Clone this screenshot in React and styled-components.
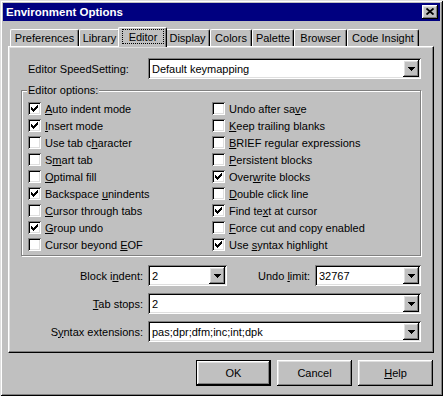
import React from 'react';
import styled, { createGlobalStyle, css } from 'styled-components';

const GlobalStyle = createGlobalStyle`
  html, body {
    margin: 0;
    padding: 0;
    background: #c0c0c0;
  }
  body {
    font-family: "Liberation Sans", Arial, sans-serif;
    font-size: 11px;
    color: #000;
  }
`;

const raised = css`
  box-shadow: inset -1px -1px #000, inset 1px 1px #fff, inset -2px -2px #808080, inset 2px 2px #dfdfdf;
`;

const sunken = css`
  box-shadow: inset 1px 1px #808080, inset -1px -1px #fff, inset 2px 2px #000, inset -2px -2px #dfdfdf;
`;

const tabs = [
    {name: 'Preferences', width: 69},
    {name: 'Library', width: 41},
    {name: 'Editor', width: 45, active: true},
    {name: 'Display', width: 45},
    {name: 'Colors', width: 42},
    {name: 'Palette', width: 42},
    {name: 'Browser', width: 53},
    {name: 'Code Insight', width: 72},
];

const options = [
    {label: 'Auto indent mode', key: 0, checked: true},
    {label: 'Insert mode', key: 0, checked: true},
    {label: 'Use tab character', key: 9},
    {label: 'Smart tab', key: 1},
    {label: 'Optimal fill', key: 0},
    {label: 'Backspace unindents', key: 10, checked: true},
    {label: 'Cursor through tabs', key: 0},
    {label: 'Group undo', key: 0, checked: true},
    {label: 'Cursor beyond EOF', key: 14},
    {label: 'Undo after save', key: 13},
    {label: 'Keep trailing blanks', key: 0},
    {label: 'BRIEF regular expressions', key: 0},
    {label: 'Persistent blocks', key: 0},
    {label: 'Overwrite blocks', key: 4, checked: true},
    {label: 'Double click line', key: 0},
    {label: 'Find text at cursor', key: 7, checked: true},
    {label: 'Force cut and copy enabled', key: 0},
    {label: 'Use syntax highlight', key: 4, checked: true},
];

// underline the access key letter
const Accel = ({text, at}) => {
    if (at === undefined || at < 0) return text;
    return (
        <>
            {text.slice(0, at)}
            <Key>{text[at]}</Key>
            {text.slice(at + 1)}
        </>
    );
};

const CheckMark = () => (
    <svg width="7" height="7" viewBox="0 0 7 7" shapeRendering="crispEdges">
        <path d="M0 2 L2 4 L7 -1 L7 2 L2 7 L0 5 Z" fill="#000" />
    </svg>
);

const DownArrow = () => (
    <svg width="7" height="4" viewBox="0 0 7 4" shapeRendering="crispEdges">
        <path d="M0 0 H7 L3.5 4 Z" fill="#000" />
    </svg>
);

const CloseGlyph = () => (
    <svg width="8" height="7" viewBox="0 0 8 7">
        <path d="M0.5 0.5 L7.5 6.5 M7.5 0.5 L0.5 6.5" stroke="#000" strokeWidth="1.8" fill="none" />
    </svg>
);

const Combo = ({value, width}) => (
    <ComboBox $width={width}>
        <ComboText>{value}</ComboText>
        <DropButton><DownArrow /></DropButton>
    </ComboBox>
);

const Option = ({label, at, checked}) => (
    <OptionRow>
        <CheckBox>{checked && <CheckMark />}</CheckBox>
        <span><Accel text={label} at={at} /></span>
    </OptionRow>
);

export default function App() {
    return (
        <>
            <GlobalStyle />
            <Window>
                <TitleBar>
                    <span>Environment Options</span>
                    <CloseButton><CloseGlyph /></CloseButton>
                </TitleBar>
                <Body>
                    <TabStrip>
                        {tabs.map(tab => (
                            <Tab key={tab.name} $width={tab.width} $active={tab.active}>
                                {tab.active ? <FocusRing>{tab.name}</FocusRing> : tab.name}
                            </Tab>
                        ))}
                    </TabStrip>
                    <Panel>
                        <FieldRow>
                            <FieldLabel>Editor SpeedSetting:</FieldLabel>
                            <Combo value="Default keymapping" />
                        </FieldRow>

                        <GroupBox>
                            <Legend>Editor options:</Legend>
                            {options.map(o => (
                                <Option key={o.label} label={o.label} at={o.key} checked={o.checked} />
                            ))}
                        </GroupBox>

                        <BottomFields>
                            <FieldRow>
                                <FieldLabel $right><Accel text="Block indent:" at={7} /></FieldLabel>
                                <Combo value="2" width={79} />
                                <InlineLabel><Accel text="Undo limit:" at={5} /></InlineLabel>
                                <Combo value="32767" width={106} />
                            </FieldRow>
                            <FieldRow>
                                <FieldLabel $right><Accel text="Tab stops:" at={0} /></FieldLabel>
                                <Combo value="2" />
                            </FieldRow>
                            <FieldRow>
                                <FieldLabel $right><Accel text="Syntax extensions:" at={1} /></FieldLabel>
                                <Combo value="pas;dpr;dfm;inc;int;dpk" />
                            </FieldRow>
                        </BottomFields>
                    </Panel>

                    <ButtonRow>
                        <Button $default>OK</Button>
                        <Button>Cancel</Button>
                        <Button><Accel text="Help" at={0} /></Button>
                    </ButtonRow>
                </Body>
            </Window>
        </>
    );
}

const Window = styled.div`
  width: 443px;
  height: 396px;
  box-sizing: border-box;
  padding: 3px;
  background: #c0c0c0;
  box-shadow: inset 1px 1px #dfdfdf, inset -1px -1px #000, inset 2px 2px #fff, inset -2px -2px #808080;
  display: flex;
  flex-direction: column;
`;

const TitleBar = styled.div`
  height: 18px;
  flex: none;
  background: #000080;
  color: #fff;
  font-weight: bold;
  font-size: 11.5px;
  display: flex;
  align-items: center;
  justify-content: space-between;
  padding: 0 2px 0 3px;
`;

const CloseButton = styled.div`
  width: 16px;
  height: 14px;
  background: #c0c0c0;
  ${raised};
  display: flex;
  align-items: center;
  justify-content: center;
  padding-bottom: 1px;
  box-sizing: border-box;
`;

const Body = styled.div`
  flex: 1;
  display: flex;
  flex-direction: column;
  padding: 6px 6px 0 5px;
`;

const TabStrip = styled.div`
  display: flex;
  align-items: flex-end;
  height: 19px;
  padding-left: 2px;
  position: relative;
  z-index: 1;
`;

const Tab = styled.div`
  width: ${p => p.$width}px;
  height: 17px;
  box-sizing: border-box;
  border-top: 1px solid #fff;
  border-left: 1px solid #fff;
  border-right: 1px solid #000;
  border-radius: 2px 2px 0 0;
  box-shadow: inset -1px 0 #808080;
  background: #c0c0c0;
  display: flex;
  align-items: center;
  justify-content: center;
  position: relative;
  ${p => p.$active && css`
    width: ${p.$width + 4}px;
    height: 20px;
    margin: 0 -2px -1px;
    z-index: 2;
    padding-bottom: 3px;
  `}
`;

const FocusRing = styled.span`
  flex: 1;
  align-self: stretch;
  margin: 1px 2px 0 3px;
  border: 1px dotted #000;
  display: flex;
  align-items: center;
  justify-content: center;
`;

const Panel = styled.div`
  width: 426px;
  height: 307px;
  box-sizing: border-box;
  border: 1px solid;
  border-color: #fff #000 #000 #fff;
  box-shadow: inset -1px -1px #808080, inset 1px 1px #dfdfdf;
  padding: 11px 12px 0 12px;
  display: flex;
  flex-direction: column;
`;

const FieldRow = styled.div`
  display: flex;
  align-items: center;
  height: 21px;
`;

const FieldLabel = styled.div`
  width: 127px;
  flex: none;
  box-sizing: border-box;
  text-align: ${p => (p.$right ? 'right' : 'left')};
  padding: ${p => (p.$right ? '0 5px 0 0' : '0 0 0 7px')};
`;

const InlineLabel = styled.div`
  flex: 1;
  text-align: right;
  padding-right: 5px;
`;

const ComboBox = styled.div`
  ${p => (p.$width ? `width: ${p.$width}px; flex: none;` : 'flex: 1;')}
  height: 21px;
  box-sizing: border-box;
  background: #fff;
  ${sunken};
  padding: 2px;
  display: flex;
  align-items: center;
`;

const ComboText = styled.div`
  flex: 1;
  padding-left: 2px;
  white-space: nowrap;
  overflow: hidden;
`;

const DropButton = styled.div`
  width: 16px;
  height: 17px;
  box-sizing: border-box;
  background: #c0c0c0;
  ${raised};
  display: flex;
  align-items: center;
  justify-content: center;
`;

const GroupBox = styled.div`
  margin-top: 11px;
  border: 1px solid #808080;
  box-shadow: inset 1px 1px #fff, 1px 1px #fff;
  position: relative;
  padding: 9px 0 2px 6px;
  display: grid;
  grid-template-columns: 184px 1fr;
  grid-template-rows: repeat(9, 17px);
  grid-auto-flow: column;
`;

const Legend = styled.span`
  position: absolute;
  top: -7px;
  left: 5px;
  padding: 0 1px;
  line-height: 13px;
  background: #c0c0c0;
`;

const OptionRow = styled.div`
  display: flex;
  align-items: center;
  gap: 4px;
  white-space: nowrap;
`;

const CheckBox = styled.div`
  width: 13px;
  height: 13px;
  flex: none;
  box-sizing: border-box;
  background: #fff;
  ${sunken};
  display: flex;
  align-items: center;
  justify-content: center;
`;

const BottomFields = styled.div`
  margin-top: 9px;
  display: flex;
  flex-direction: column;
  gap: 7px;
`;

const ButtonRow = styled.div`
  display: flex;
  justify-content: flex-end;
  gap: 6px;
  margin-top: 7px;
  padding-right: 1px;
`;

const Button = styled.button`
  width: 75px;
  height: 26px;
  box-sizing: border-box;
  font: inherit;
  color: #000;
  background: #c0c0c0;
  border: ${p => (p.$default ? '1px solid #000' : 'none')};
  padding: 0;
  ${raised};
`;

const Key = styled.u`
  text-decoration: underline;
  text-underline-offset: 1px;
`;
